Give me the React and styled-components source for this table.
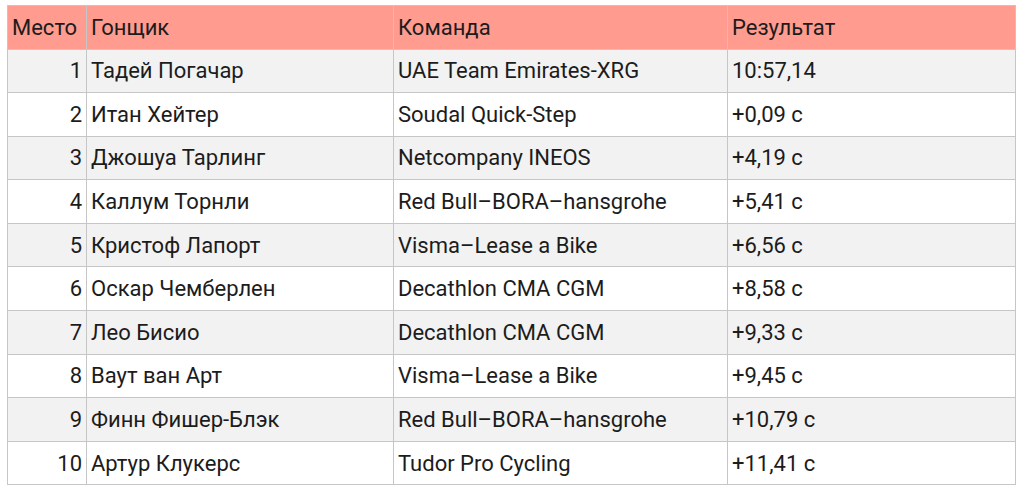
import React from 'react';
import styled, { createGlobalStyle } from 'styled-components';

const GlobalStyle = createGlobalStyle`
    body {
        margin: 0;
        background: #ffffff;
        font-family: Roboto, "Liberation Sans", sans-serif;
    }
`;

const rows = [
    { place: 1, rider: 'Тадей Погачар', team: 'UAE Team Emirates-XRG', result: '10:57,14' },
    { place: 2, rider: 'Итан Хейтер', team: 'Soudal Quick-Step', result: '+0,09 с' },
    { place: 3, rider: 'Джошуа Тарлинг', team: 'Netcompany INEOS', result: '+4,19 с' },
    { place: 4, rider: 'Каллум Торнли', team: 'Red Bull–BORA–hansgrohe', result: '+5,41 с' },
    { place: 5, rider: 'Кристоф Лапорт', team: 'Visma–Lease a Bike', result: '+6,56 с' },
    { place: 6, rider: 'Оскар Чемберлен', team: 'Decathlon CMA CGM', result: '+8,58 с' },
    { place: 7, rider: 'Лео Бисио', team: 'Decathlon CMA CGM', result: '+9,33 с' },
    { place: 8, rider: 'Ваут ван Арт', team: 'Visma–Lease a Bike', result: '+9,45 с' },
    { place: 9, rider: 'Финн Фишер-Блэк', team: 'Red Bull–BORA–hansgrohe', result: '+10,79 с' },
    { place: 10, rider: 'Артур Клукерс', team: 'Tudor Pro Cycling', result: '+11,41 с' },
];

export default function App() {
    return (
        <>
            <GlobalStyle />
            <Wrap>
                <Table>
                    <colgroup>
                        <col style={{ width: '79px' }} />
                        <col style={{ width: '307px' }} />
                        <col style={{ width: '334px' }} />
                        <col style={{ width: '288px' }} />
                    </colgroup>
                    <thead>
                        <tr>
                            <Th>Место</Th>
                            <Th>Гонщик</Th>
                            <Th>Команда</Th>
                            <Th>Результат</Th>
                        </tr>
                    </thead>
                    <tbody>
                        {rows.map((row) => (
                            <Row key={row.place} $odd={row.place % 2 === 1}>
                                <Td $right>{row.place}</Td>
                                <Td>{row.rider}</Td>
                                <Td>{row.team}</Td>
                                <Td>{row.result}</Td>
                            </Row>
                        ))}
                    </tbody>
                </Table>
            </Wrap>
        </>
    );
}

const Wrap = styled.div`
    padding: 5px 9px 0 7px;
`;

const Table = styled.table`
    width: 1008px;
    table-layout: fixed;
    border-collapse: collapse;
    border: 1.5px solid #c6c6c6;
    color: #1c1c1c;
    font-size: 22px;
`;

const Th = styled.th`
    height: 42.5px;
    padding: 0 4px;
    text-align: left;
    font-weight: 400;
    background: #ff9b8f;
    border: 1.5px solid #c6c6c6;
    white-space: nowrap;
`;

const Row = styled.tr`
    background: ${(p) => (p.$odd ? '#f2f2f2' : '#ffffff')};
`;

const Td = styled.td`
    height: 42.6px;
    padding: 0 4px;
    text-align: ${(p) => (p.$right ? 'right' : 'left')};
    border: 1.5px solid #c6c6c6;
    white-space: nowrap;
`;
